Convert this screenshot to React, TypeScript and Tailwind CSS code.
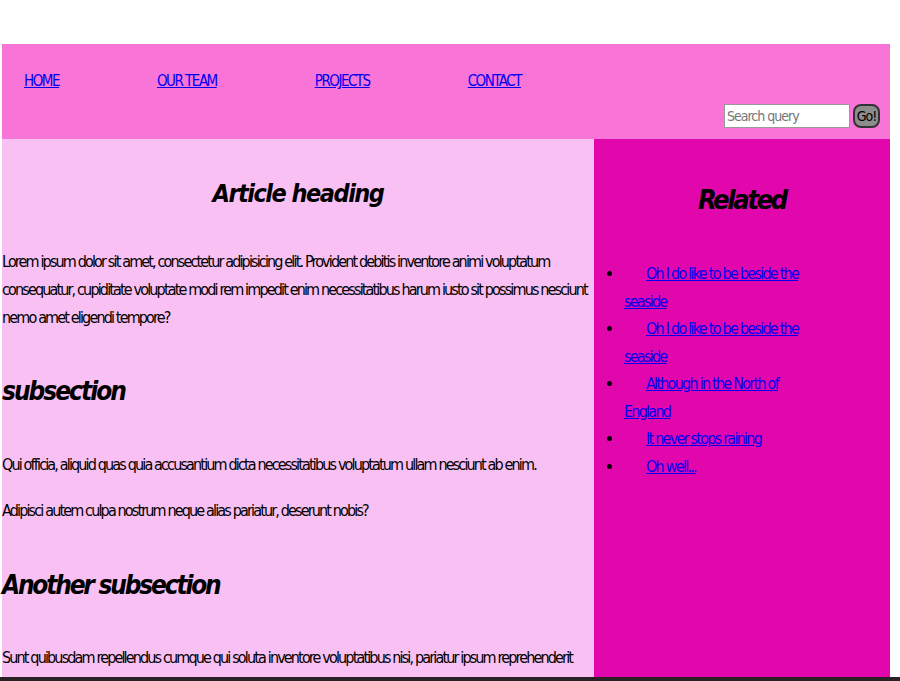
import React from "react";

const navLinks = ["HOME", "OUR TEAM", "PROJECTS", "CONTACT"];

const related = [
  "Oh I do like to be beside the seaside",
  "Oh I do like to be beside the seaside",
  "Although in the North of England",
  "It never stops raining",
  "Oh well...",
];

const font = "font-['DejaVu_Sans_Condensed',Roboto,sans-serif]";

export default function App() {
  return (
    <div className={`h-[681px] overflow-hidden bg-white flex flex-col ${font}`}>
      <div className="pt-[44px] pl-[2px] pr-[10px] flex-1 min-h-0 flex flex-col">
        <header className="bg-[#f974d7] h-[95px] flex flex-col">
          <nav className="flex gap-[98px] pl-[22px] pt-[28px]">
            {navLinks.map((l) => (
              <a key={l} href="#" className="text-[15px] leading-[18px] tracking-[-1.5px] text-[#0000ee] underline">
                {l}
              </a>
            ))}
          </nav>
          <div className="flex justify-end items-center gap-[3px] pr-[10px] mt-[14px]">
            <input
              placeholder="Search query"
              className="w-[126px] h-[24px] bg-white border border-[#999] px-[2px] text-[14px] tracking-[-1px] placeholder:text-[#757575]"
            />
            <button className="w-[27px] h-[24px] rounded-[8px] bg-[#8c8c8c] border-2 border-[#333] text-[14px] tracking-[-1px] text-black flex items-center justify-center">
              Go!
            </button>
          </div>
        </header>
        <main className="flex flex-1 min-h-0">
          <article className="w-[592px] bg-[#f9c1f3] text-black">
            <h1 className="text-center text-[25px] leading-[34px] tracking-[-1.5px] font-bold italic mt-[38px]">
              Article heading
            </h1>
            <p className="text-[16px] leading-[28px] tracking-[-1.85px] mt-[37px]">
              Lorem ipsum dolor sit amet, consectetur adipisicing elit. Provident debitis inventore animi voluptatum
              consequatur, cupiditate voluptate modi rem impedit enim necessitatibus harum iusto sit possimus nesciunt
              nemo amet eligendi tempore?
            </p>
            <h2 className="text-[26px] leading-[36px] tracking-[-2px] font-bold italic mt-[41px]">subsection</h2>
            <p className="text-[16px] leading-[28px] tracking-[-1.85px] mt-[42px]">
              Qui officia, aliquid quas quia accusantium dicta necessitatibus voluptatum ullam nesciunt ab enim.
            </p>
            <p className="text-[16px] leading-[28px] tracking-[-1.85px] mt-[18px]">
              Adipisci autem culpa nostrum neque alias pariatur, deserunt nobis?
            </p>
            <h2 className="text-[26px] leading-[36px] tracking-[-2.2px] font-bold italic mt-[42px]">
              Another subsection
            </h2>
            <p className="text-[16px] leading-[28px] tracking-[-1.85px] mt-[41px]">
              Sunt quibusdam repellendus cumque qui soluta inventore voluptatibus nisi, pariatur ipsum reprehenderit
            </p>
          </article>
          <aside className="w-[296px] bg-[#e206ad]">
            <h2 className="text-center text-[27px] leading-[38px] tracking-[-2.3px] font-bold italic mt-[42px]">
              Related
            </h2>
            <ul className="list-disc pl-[30px] mr-[75px] mt-[41px]">
              {related.map((r, i) => (
                <li key={i} className="text-[16px] leading-[27.5px] tracking-[-1.75px] indent-[22px]">
                  <a href="#" className="text-[#0000ee] underline">
                    {r}
                  </a>
                </li>
              ))}
            </ul>
          </aside>
        </main>
      </div>
      <div className="h-[4px] bg-[#2a2226]" />
    </div>
  );
}
